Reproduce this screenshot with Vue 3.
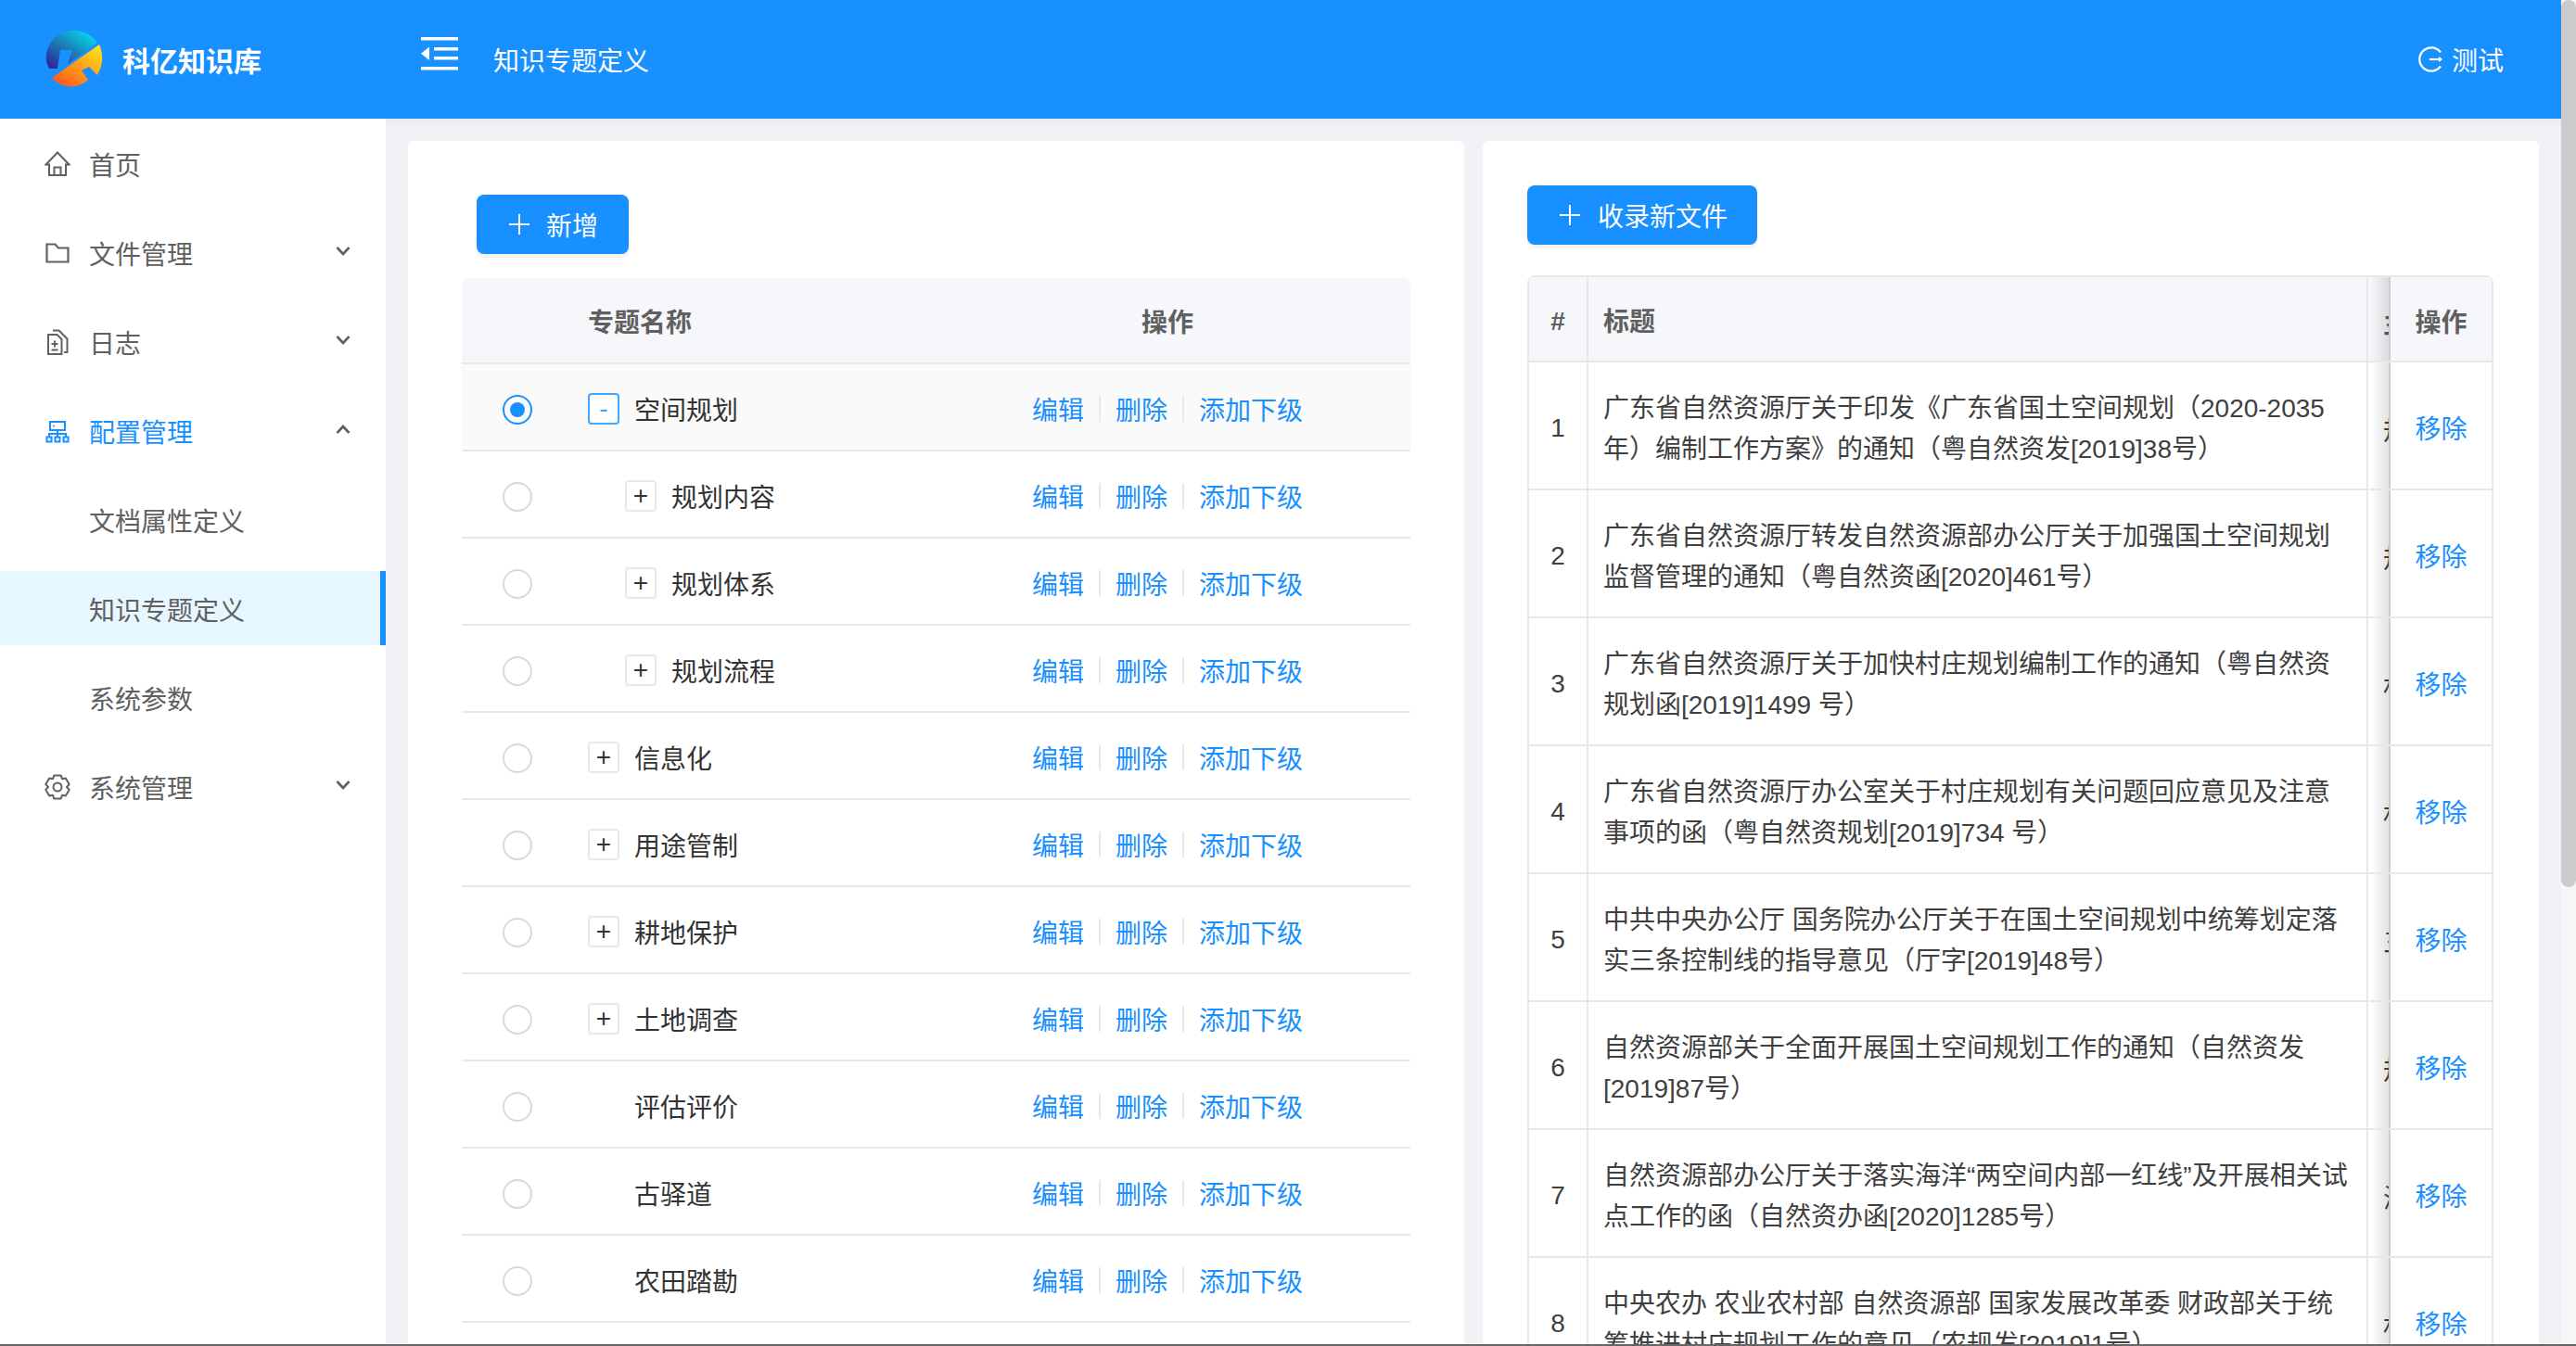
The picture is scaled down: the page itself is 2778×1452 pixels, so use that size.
<template>
  <div class="app">
    <div class="page">
      <header class="topbar">
        <div class="brand">
          <svg class="logo" width="62" height="62" viewBox="0 0 62 62">
            <defs>
              <linearGradient id="logoCool" x1="0.95" y1="0" x2="0.1" y2="0.95">
                <stop offset="0" stop-color="#00e8f8" />
                <stop offset="0.5" stop-color="#1a86b8" />
                <stop offset="1" stop-color="#2c2a9c" />
              </linearGradient>
              <linearGradient id="logoWarm" x1="0.95" y1="0.1" x2="0.2" y2="1">
                <stop offset="0" stop-color="#ffe015" />
                <stop offset="1" stop-color="#ff5a1c" />
              </linearGradient>
            </defs>
            <path fill="url(#logoCool)" d="M1 25 C4 10 16 0 31 0 C41 0 50 5 56 13 L24 36 L29 21 L16 21 L13 41 L4 41 C1 35 0 30 1 25 Z" />
            <path fill="url(#logoWarm)" d="M58 15 C63 26 62 38 56 48 L47 39 L39 43 L46 53 C34 64 17 62 7 51 Z" />
          </svg>
          <span class="brand-name">科亿知识库</span>
        </div>
        <svg class="fold" width="40" height="36" viewBox="0 0 40 36">
          <path fill="#fff" d="M0 0H40V3.500H0ZM0 32H40V35.500H0ZM14 11H40V14.500H14ZM14 21H40V24.500H14ZM9 10.500V25L0 17.800Z" />
        </svg>
        <span class="page-title">知识专题定义</span>
        <div class="user">
          <svg width="28" height="28" viewBox="0 0 28 28" fill="none" stroke="#fff" stroke-width="2.200">
            <path d="M25 6.500A12.600 12.600 0 1 0 25 21.500" />
            <path d="M13 14H26" />
            <path d="M23 11L27 14L23 17Z" fill="#fff" stroke="none" />
          </svg>
          <span>测试</span>
        </div>
      </header>

      <div class="body">
        <aside class="sidebar">
          <div
            v-for="item in menu"
            :key="item.label"
            class="menu-item"
            :class="{ active: item.active, selected: item.selected, sub: item.sub }"
          >
            <svg v-if="item.icon" class="menu-icon" width="28" height="28" viewBox="0 0 28 28" fill="none" stroke="currentColor" stroke-width="2">
              <template v-if="item.icon === 'home'">
                <path d="M1.500 14.500L14 1.500L26.500 14.500H23V26H5V14.500Z" />
                <path d="M10.500 26V17.500H17.500V26" />
              </template>
              <path v-else-if="item.icon === 'folder'" d="M2.500 4.500H11.500L15 8.500H25.500V23.500H2.500Z" stroke-width="2.200" />
              <template v-else-if="item.icon === 'file'">
                <path d="M4 6H13.500L18.500 11V27H4Z" />
                <path d="M9 1.500H15.500L24.500 10.500V25H21" />
                <path d="M11 12.500V19.500M7.500 16H14.500M7.500 22.500H14.500" />
              </template>
              <template v-else-if="item.icon === 'cluster'">
                <path d="M6 4H22V13H6ZM14 13V20M5 20V17H23V20" />
                <path d="M2.500 20.500H7.500V25.500H2.500ZM11.500 20.500H16.500V25.500H11.500ZM20.500 20.500H25.500V25.500H20.500Z" />
                <circle cx="10" cy="8.500" r="1" fill="currentColor" stroke="none" />
              </template>
              <template v-else-if="item.icon === 'setting'">
                <path :d="gearPath" stroke-linejoin="round" />
                <circle cx="14" cy="14" r="4.500" />
              </template>
            </svg>
            <span>{{ item.label }}</span>
            <svg v-if="item.arrow" class="chevron" width="16" height="10" viewBox="0 0 16 10" fill="none" stroke="#606060" stroke-width="2.600">
              <path :d="item.arrow === 'up' ? 'M1.500 9L8 2L14.500 9' : 'M1.500 1L8 8L14.500 1'" />
            </svg>
          </div>
        </aside>

        <main class="content">
          <section class="card left-card">
            <button class="btn add-btn">
              <svg width="24" height="24" viewBox="0 0 24 24" stroke="#fff" stroke-width="2"><path d="M12 1V23M1 12H23" /></svg>
              <span>新增</span>
            </button>
            <div class="tree-table">
              <div class="tree-row tree-head">
                <div></div>
                <div class="tree-name-head">专题名称</div>
                <div class="tree-ops">操作</div>
                <div></div>
              </div>
              <div v-for="row in topics" :key="row.name" class="tree-row" :class="{ checked: row.checked }">
                <div class="radio-cell"><span class="radio"></span></div>
                <div class="tree-name" :class="{ child: row.child }">
                  <span v-if="row.mark" class="expander">{{ row.mark }}</span>
                  <span v-else class="expander-gap"></span>
                  <span>{{ row.name }}</span>
                </div>
                <div class="tree-ops">
                  <a>编辑</a><i class="split"></i><a>删除</a><i class="split"></i><a>添加下级</a>
                </div>
                <div></div>
              </div>
            </div>
          </section>

          <section class="card right-card">
            <button class="btn collect-btn">
              <svg width="24" height="24" viewBox="0 0 24 24" stroke="#fff" stroke-width="2"><path d="M12 1V23M1 12H23" /></svg>
              <span>收录新文件</span>
            </button>
            <div class="doc-table">
              <div class="doc-row doc-head">
                <div class="doc-no">#</div>
                <div class="doc-title">标题</div>
                <div class="doc-clip">主题</div>
                <div class="doc-op">操作</div>
              </div>
              <div v-for="(doc, i) in docs" :key="i" class="doc-row">
                <div class="doc-no">{{ i + 1 }}</div>
                <div class="doc-title">{{ doc.title }}</div>
                <div class="doc-clip">{{ doc.topic }}</div>
                <div class="doc-op"><a>移除</a></div>
              </div>
            </div>
          </section>
        </main>
      </div>
    </div>
    <div class="scroll-track"><div class="scroll-thumb"></div></div>
  </div>
</template>

<script setup>
const menu = [
  { label: '首页', icon: 'home' },
  { label: '文件管理', icon: 'folder', arrow: 'down' },
  { label: '日志', icon: 'file', arrow: 'down' },
  { label: '配置管理', icon: 'cluster', arrow: 'up', active: true },
  { label: '文档属性定义', sub: true },
  { label: '知识专题定义', sub: true, selected: true },
  { label: '系统参数', sub: true },
  { label: '系统管理', icon: 'setting', arrow: 'down' }
]

const topics = [
  { name: '空间规划', mark: '-', checked: true },
  { name: '规划内容', mark: '+', child: true },
  { name: '规划体系', mark: '+', child: true },
  { name: '规划流程', mark: '+', child: true },
  { name: '信息化', mark: '+' },
  { name: '用途管制', mark: '+' },
  { name: '耕地保护', mark: '+' },
  { name: '土地调查', mark: '+' },
  { name: '评估评价' },
  { name: '古驿道' },
  { name: '农田踏勘' }
]

const docs = [
  { title: '广东省自然资源厅关于印发《广东省国土空间规划（2020-2035\n年）编制工作方案》的通知（粤自然资发[2019]38号）', topic: '规划' },
  { title: '广东省自然资源厅转发自然资源部办公厅关于加强国土空间规划\n监督管理的通知（粤自然资函[2020]461号）', topic: '规划' },
  { title: '广东省自然资源厅关于加快村庄规划编制工作的通知（粤自然资\n规划函[2019]1499 号）', topic: '村庄' },
  { title: '广东省自然资源厅办公室关于村庄规划有关问题回应意见及注意\n事项的函（粤自然资规划[2019]734 号）', topic: '村庄' },
  { title: '中共中央办公厅 国务院办公厅关于在国土空间规划中统筹划定落\n实三条控制线的指导意见（厅字[2019]48号）', topic: '三线' },
  { title: '自然资源部关于全面开展国土空间规划工作的通知（自然资发\n[2019]87号）', topic: '规划' },
  { title: '自然资源部办公厅关于落实海洋“两空间内部一红线”及开展相关试\n点工作的函（自然资办函[2020]1285号）', topic: '海洋' },
  { title: '中央农办 农业农村部 自然资源部 国家发展改革委 财政部关于统\n筹推进村庄规划工作的意见（农规发[2019]1号）', topic: '村庄' }
]

// six lobed outline for the settings icon
function buildGear() {
  const pts = []
  for (let i = 0; i < 6; i++) {
    const a = (Math.PI / 3) * i - Math.PI / 2
    const step = [-0.3, 0.3]
    step.forEach((d) => pts.push([14 + 13 * Math.cos(a + d), 14 + 13 * Math.sin(a + d)]))
    pts.push([14 + 10 * Math.cos(a + Math.PI / 6), 14 + 10 * Math.sin(a + Math.PI / 6)])
  }
  return 'M' + pts.map((p) => p[0].toFixed(1) + ' ' + p[1].toFixed(1)).join('L') + 'Z'
}
const gearPath = buildGear()
</script>

<style scoped>
.app {
  display: flex;
  width: 2778px;
  height: 1452px;
  border-bottom: 2px solid #666;
  box-sizing: border-box;
  overflow: hidden;
  font-family: "Liberation Sans", "Noto Sans CJK SC", sans-serif;
  font-size: 28px;
  background: #f0f2f5;
}
.page {
  flex: 1;
  display: flex;
  flex-direction: column;
  min-width: 0;
}
.topbar {
  flex: none;
  height: 128px;
  display: flex;
  align-items: center;
  background: #1890ff;
  color: #fff;
}
.brand {
  width: 454px;
  flex: none;
  display: flex;
  align-items: center;
  padding-left: 49px;
  box-sizing: border-box;
}
.brand-name {
  margin-left: 21px;
  font-size: 30px;
  font-weight: 700;
}
.fold {
  flex: none;
  margin-top: -12px;
}
.page-title {
  margin-left: 38px;
}
.user {
  margin-left: auto;
  margin-right: 62px;
  display: flex;
  align-items: center;
  gap: 9px;
}
.body {
  flex: 1;
  display: flex;
  min-height: 0;
}
.sidebar {
  flex: none;
  width: 416px;
  padding-top: 8px;
  box-sizing: border-box;
  background: #fff;
  color: #606060;
}
.menu-item {
  height: 80px;
  margin-bottom: 16px;
  padding: 2px 0 0 48px;
  box-sizing: border-box;
  display: flex;
  align-items: center;
  gap: 20px;
}
.menu-item.sub {
  padding-left: 96px;
}
.menu-item.active {
  color: #1890ff;
}
.menu-item.selected {
  background: #e6f7ff;
  border-right: 6px solid #1890ff;
}
.menu-icon {
  flex: none;
}
.chevron {
  margin-left: auto;
  margin-right: 38px;
  margin-top: -4px;
}
.content {
  flex: 1;
  min-width: 0;
  display: grid;
  grid-template-columns: 1fr 1fr;
  gap: 20px;
  padding: 24px 24px 0;
  box-shadow: inset 0 8px 8px -6px rgba(0, 0, 0, 0.06);
  overflow: hidden;
}
.card {
  background: #fff;
  border-radius: 6px 6px 0 0;
  min-width: 0;
}
.left-card {
  padding: 58px 58px 0;
}
.right-card {
  padding: 48px 49px 0 48px;
}
.btn {
  display: inline-flex;
  align-items: center;
  height: 64px;
  border: none;
  border-radius: 8px;
  background: #1890ff;
  color: #fff;
  font: inherit;
  box-shadow: 0 4px 0 rgba(0, 0, 0, 0.045);
  cursor: pointer;
}
.add-btn {
  width: 164px;
  margin-left: 16px;
  margin-bottom: 26px;
  padding: 0 32px 0 34px;
  gap: 17px;
}
.collect-btn {
  width: 248px;
  margin-bottom: 33px;
  padding: 0 32px 0 34px;
  gap: 18px;
}
.btn svg {
  flex: none;
}
.tree-row {
  display: grid;
  grid-template-columns: 120px 1fr 324px 100px;
  align-items: center;
  height: 94px;
  padding-top: 3px;
  border-bottom: 2px solid #e8e8e8;
  box-sizing: border-box;
  color: #333;
}
.tree-head {
  height: 93px;
  padding-top: 0;
  background: #f5f7fa;
  border-radius: 8px 8px 0 0;
  font-weight: 700;
  color: #606060;
}
.tree-row.checked {
  background: #fafafa;
}
.radio-cell {
  display: flex;
  justify-content: center;
}
.radio {
  width: 32px;
  height: 32px;
  margin-top: 2px;
  border: 2px solid #d9d9d9;
  border-radius: 50%;
  box-sizing: border-box;
  position: relative;
}
.checked .radio {
  border-color: #1890ff;
}
.checked .radio::after {
  content: "";
  position: absolute;
  inset: 6px;
  border-radius: 50%;
  background: #1890ff;
}
.tree-name-head {
  padding-left: 16px;
}
.tree-name {
  display: flex;
  align-items: center;
  gap: 16px;
  padding-left: 16px;
}
.tree-name.child {
  padding-left: 56px;
}
.expander {
  width: 34px;
  height: 34px;
  flex: none;
  display: flex;
  align-items: center;
  justify-content: center;
  border: 2px solid #e8e8e8;
  border-radius: 4px;
  box-sizing: border-box;
  line-height: 1;
  color: #333;
  background: #fff;
}
.checked .expander {
  border-color: #40a9ff;
  color: #40a9ff;
}
.expander-gap {
  width: 34px;
  flex: none;
}
.tree-ops {
  display: flex;
  align-items: center;
  justify-content: center;
}
.tree-ops a,
.doc-op a {
  color: #1890ff;
  cursor: pointer;
}
.split {
  width: 2px;
  height: 28px;
  margin: 0 16px;
  background: #e8e8e8;
}
.doc-table {
  border-top: 2px solid #e8e8e8;
  border-radius: 8px 8px 0 0;
  overflow: hidden;
}
.doc-row {
  display: grid;
  grid-template-columns: 66px 841px 24px 1fr;
  height: 138px;
  border-bottom: 2px solid #e8e8e8;
  box-sizing: border-box;
  color: #404040;
}
.doc-head {
  height: 92px;
  background: #f5f7fa;
  font-weight: 700;
  color: #606060;
}
.doc-row > div {
  display: flex;
  align-items: center;
  border-right: 2px solid #e8e8e8;
  box-sizing: border-box;
}
.doc-no {
  justify-content: center;
  padding-top: 6px;
  border-left: 2px solid #e8e8e8;
}
.doc-title {
  padding: 8px 0 0 16px;
  line-height: 44px;
  white-space: pre;
}
.doc-clip {
  padding: 8px 0 0 16px;
  overflow: hidden;
  white-space: nowrap;
}
.doc-row > .doc-op {
  position: relative;
  justify-content: center;
  padding-top: 4px;
  background: #fff;
}
.doc-head > .doc-op {
  background: #f5f7fa;
}
.doc-op::before {
  content: "";
  position: absolute;
  top: 0;
  bottom: 0;
  left: -22px;
  width: 22px;
  background: linear-gradient(to right, rgba(0, 0, 0, 0), rgba(0, 0, 0, 0.12));
}
.scroll-track {
  flex: none;
  width: 16px;
  background: #f6f6f6;
}
.scroll-thumb {
  height: 957px;
  border-radius: 8px;
  background: #cbcbcb;
}
</style>

<style>
html,
body {
  margin: 0;
  overflow: hidden;
}
</style>
